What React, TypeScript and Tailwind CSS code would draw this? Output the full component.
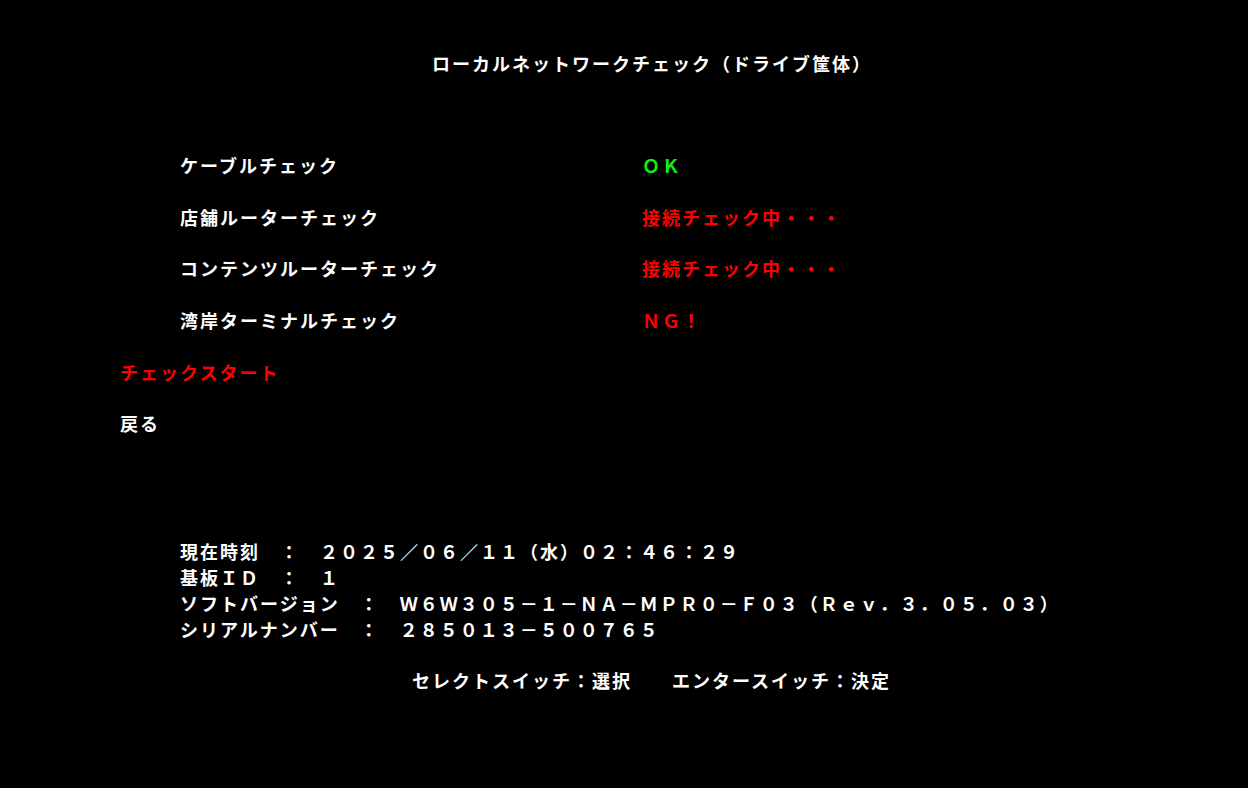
import React from "react";

const font = {
  fontFamily: '"Noto Sans CJK JP", "Noto Sans", sans-serif',
};

type Row = { label: string; status: string; tone: "ok" | "busy" | "ng" };

const rows: Row[] = [
  { label: "ケーブルチェック", status: "ＯＫ", tone: "ok" },
  { label: "店舗ルーターチェック", status: "接続チェック中・・・", tone: "busy" },
  { label: "コンテンツルーターチェック", status: "接続チェック中・・・", tone: "busy" },
  { label: "湾岸ターミナルチェック", status: "ＮＧ！", tone: "ng" },
];

const info: [string, string][] = [
  ["現在時刻　", "２０２５／０６／１１（水）０２：４６：２９"],
  ["基板ＩＤ　", "１"],
  ["ソフトバージョン　", "Ｗ６Ｗ３０５－１－ＮＡ－ＭＰＲ０－Ｆ０３（Ｒｅｖ．３．０５．０３）"],
  ["シリアルナンバー　", "２８５０１３－５００７６５"],
];

export default function App() {
  return (
    <div
      style={font}
      className="w-[1248px] h-[788px] bg-black text-white font-bold text-[18px] tracking-[2px] flex flex-col overflow-hidden"
    >
      {/* screen title */}
      <div className="pt-[50px] pl-[432px] leading-[26px] whitespace-pre">
        ローカルネットワークチェック（ドライブ筐体）
      </div>

      {/* check items */}
      <div className="mt-[64px] flex flex-col">
        {rows.map((r) => (
          <div key={r.label} className="h-[51.6px] flex items-center pl-[180px]">
            <span className="w-[462px] whitespace-pre">{r.label}</span>
            <span
              className={
                r.tone === "ok"
                  ? "text-[#10f010] whitespace-pre"
                  : "text-[#ff0000] whitespace-pre"
              }
            >
              {r.status}
            </span>
          </div>
        ))}
        <div className="h-[51.6px] flex items-center pl-[120px] text-[#ff0000]">
          チェックスタート
        </div>
        <div className="h-[51.6px] flex items-center pl-[120px]">戻る</div>
      </div>

      {/* board info */}
      <div className="mt-[88px] pl-[180px] flex flex-col leading-[26px]">
        {info.map(([k, v]) => (
          <div key={k} className="whitespace-pre">
            {k}：　{v}
          </div>
        ))}
      </div>

      {/* key guide */}
      <div className="mt-[25px] pl-[412px] leading-[26px] whitespace-pre">
        セレクトスイッチ：選択　　エンタースイッチ：決定
      </div>
    </div>
  );
}
